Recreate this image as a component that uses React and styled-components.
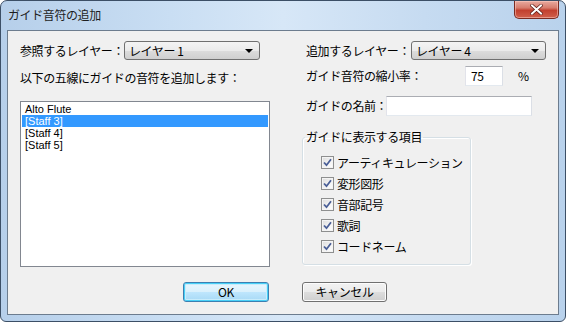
import React from 'react';
import styled, { createGlobalStyle, css } from 'styled-components';

const Global = createGlobalStyle`
  html, body { margin: 0; padding: 0; background: #fff; }
  body {
    font-family: "Noto Sans CJK JP", "Liberation Sans", sans-serif;
    font-size: 12px;
    letter-spacing: -0.4px;
    color: #000;
  }
`;

const Window = styled.div`
  width: 566px;
  height: 322px;
  box-sizing: border-box;
  border: 1px solid #3c4f66;
  border-radius: 7px 7px 6px 6px;
  background: linear-gradient(90deg, #b6cfea 0%, #c9def3 30%, #d7e7f7 50%, #c6dbf1 75%, #b9d2ec 100%);
  display: flex;
  flex-direction: column;
  overflow: hidden;
`;

const TitleBar = styled.div`
  height: 29px;
  display: flex;
  align-items: flex-start;
  padding-left: 7px;
`;

const Title = styled.div`
  margin-top: 6px;
  font-size: 12px;
  line-height: 16px;
  color: #1e1e1e;
`;

const CloseButton = styled.div`
  margin-left: auto;
  margin-right: 6px;
  width: 45px;
  height: 18px;
  box-sizing: border-box;
  border: 1px solid #7a2b22;
  border-top: none;
  border-radius: 0 0 5px 5px;
  background: linear-gradient(180deg, #e9aa9f 0%, #d77d6e 40%, #c2402f 55%, #d0604c 100%);
  box-shadow: inset 0 0 0 1px rgba(255, 210, 200, 0.5);
  display: flex;
  align-items: center;
  justify-content: center;
`;

const Client = styled.div`
  margin: 0 6px 6px 6px;
  flex: 1;
  border: 1px solid #6c7c8e;
  background: #f0f0f0;
  display: flex;
  flex-direction: column;
`;

const Columns = styled.div`
  display: flex;
  padding: 10px 0 0 12px;
`;

const Column = styled.div`
  width: ${p => p.w}px;
  margin-left: ${p => p.ml || 0}px;
  display: flex;
  flex-direction: column;
`;

const Row = styled.div`
  display: flex;
  align-items: center;
  height: ${p => p.h || 19}px;
  margin-top: ${p => p.mt || 0}px;
`;

const Label = styled.span`
  width: ${p => (p.w ? `${p.w}px` : 'auto')};
  margin-left: ${p => p.ml || 0}px;
  flex: none;
  white-space: nowrap;
  line-height: 16px;
`;

const Combo = styled.div`
  width: ${p => p.w}px;
  height: 19px;
  box-sizing: border-box;
  border: 1px solid #707070;
  border-radius: 3px;
  background: linear-gradient(180deg, #f4f4f4 0%, #ebebeb 50%, #dddddd 51%, #cfcfcf 100%);
  display: flex;
  align-items: center;
  padding: 0 6px 0 4px;
  line-height: 16px;
`;

const Arrow = styled.span`
  margin-left: auto;
  width: 0;
  height: 0;
  border-left: 4px solid transparent;
  border-right: 4px solid transparent;
  border-top: 4px solid #000;
`;

const TextBox = styled.div`
  width: ${p => p.w}px;
  height: ${p => p.h || 20}px;
  box-sizing: border-box;
  border: 1px solid #abadb3;
  border-top-color: #abadb3;
  border-left-color: #e2e3ea;
  border-right-color: #dbdfe6;
  border-bottom-color: #e3e9ef;
  background: #fff;
  padding-left: 5px;
  display: flex;
  align-items: center;
  line-height: 16px;
`;

const ListBox = styled.div`
  margin-top: 15px;
  height: 166px;
  box-sizing: border-box;
  border: 1px solid #828790;
  background: #fff;
  padding: 1px;
  font-family: "Liberation Sans", "Noto Sans CJK JP", sans-serif;
  letter-spacing: 0;
`;

const ListItem = styled.div`
  height: 12px;
  line-height: 12px;
  padding-left: 3px;
  font-size: 11px;
  overflow: hidden;
  ${p => p.selected && css`
    background: #3399ff;
    color: #fff;
  `}
`;

const Group = styled.fieldset`
  margin: 14px 0 0 -4px;
  width: 169px;
  height: 135px;
  box-sizing: border-box;
  border: 1px solid #d5dfe5;
  border-radius: 3px;
  box-shadow: inset 1px 1px 0 #fff, 1px 1px 0 #fff;
  padding: 8px 0 0 2px;
  display: flex;
  flex-direction: column;
`;

const Legend = styled.legend`
  padding: 0 1px;
  margin-left: 0;
  line-height: 14px;
`;

const CheckRow = styled.label`
  display: flex;
  align-items: center;
  height: 21px;
  gap: 3px;
  margin-left: 16px;
`;

const CheckBox = styled.span`
  width: 13px;
  height: 13px;
  box-sizing: border-box;
  border: 1px solid #8e8f8f;
  background: linear-gradient(135deg, #dcdcdc 0%, #f4f4f4 60%, #fff 100%);
  box-shadow: inset 0 0 0 1px #f4f4f4;
  display: flex;
  align-items: center;
  justify-content: center;
`;

const Buttons = styled.div`
  display: flex;
  justify-content: center;
  gap: 33px;
  margin-top: 15px;
  padding-left: 4px;
`;

const Button = styled.div`
  width: ${p => p.w}px;
  height: 20px;
  box-sizing: border-box;
  border: 1px solid #707070;
  border-radius: 3px;
  background: linear-gradient(180deg, #f2f2f2 0%, #ebebeb 50%, #dddddd 51%, #cfcfcf 100%);
  box-shadow: inset 0 0 0 1px #fcfcfc;
  display: flex;
  align-items: center;
  justify-content: center;
  line-height: 16px;
  ${p => p.primary && css`
    border-color: #3c7fb1;
    background: linear-gradient(180deg, #eaf6fd 0%, #d9f0fc 50%, #bee6fd 51%, #a7d9f5 100%);
    box-shadow: inset 0 0 0 1px #48d0f7, inset 0 0 0 2px #c9ecfb;
  `}
`;

const Check = () => (
  <CheckBox>
    <svg width="9" height="9" viewBox="0 0 9 9">
      <path d="M1 4.5 L3.5 7.2 L8 1.2" fill="none" stroke="#4a5f97" strokeWidth="1.8" />
    </svg>
  </CheckBox>
);

const items = ['アーティキュレーション', '変形図形', '音部記号', '歌詞', 'コードネーム'];
const staves = ['Alto Flute', '[Staff 3]', '[Staff 4]', '[Staff 5]'];

export default function App() {
  return (
    <>
      <Global />
      <Window>
        <TitleBar>
          <Title>ガイド音符の追加</Title>
          <CloseButton>
            <svg width="13" height="11" viewBox="0 0 13 11">
              <path d="M2 1.5 L11 9.5 M11 1.5 L2 9.5" stroke="#5a1a14" strokeWidth="3.4" strokeLinecap="square" />
              <path d="M2 1.5 L11 9.5 M11 1.5 L2 9.5" stroke="#fff" strokeWidth="2" strokeLinecap="square" />
            </svg>
          </CloseButton>
        </TitleBar>
        <Client>
          <Columns>
            <Column w={250}>
              <Row>
                <Label w={104}>参照するレイヤー：</Label>
                <Combo w={136}>レイヤー 1<Arrow /></Combo>
              </Row>
              <Row mt={10} h={16}>
                <Label>以下の五線にガイドの音符を追加します：</Label>
              </Row>
              <ListBox>
                {staves.map((s, i) => (
                  <ListItem key={s} selected={i === 1}>{s}</ListItem>
                ))}
              </ListBox>
            </Column>
            <Column w={243} ml={36}>
              <Row>
                <Label w={105}>追加するレイヤー：</Label>
                <Combo w={135}>レイヤー 4<Arrow /></Combo>
              </Row>
              <Row mt={6} h={20}>
                <Label w={159}>ガイド音符の縮小率：</Label>
                <TextBox w={38}>75</TextBox>
                <Label ml={15}>%</Label>
              </Row>
              <Row mt={10} h={20}>
                <Label w={80}>ガイドの名前：</Label>
                <TextBox w={146}></TextBox>
              </Row>
              <Group>
                <Legend>ガイドに表示する項目</Legend>
                {items.map(t => (
                  <CheckRow key={t}>
                    <Check />
                    {t}
                  </CheckRow>
                ))}
              </Group>
            </Column>
          </Columns>
          <Buttons>
            <Button primary w={86}>OK</Button>
            <Button w={85}>キャンセル</Button>
          </Buttons>
        </Client>
      </Window>
    </>
  );
}
